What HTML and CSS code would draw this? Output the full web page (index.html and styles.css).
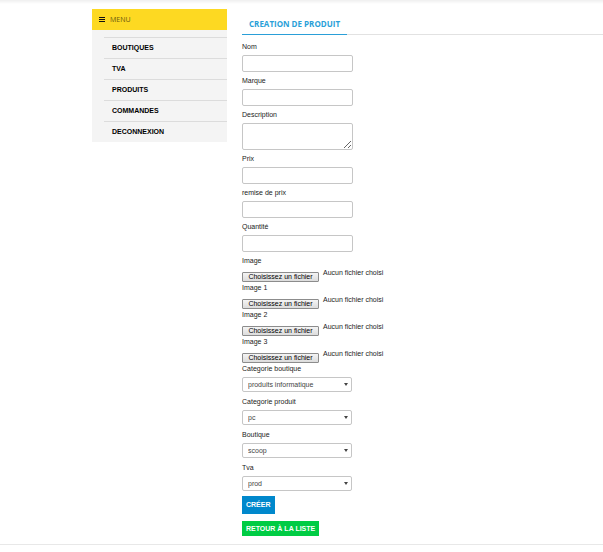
FILE: index.html
```html
<!DOCTYPE html>
<html lang="fr">
<head>
<meta charset="utf-8">
<meta name="viewport" content="width=device-width, initial-scale=1">
<title>Creation de produit</title>
<link rel="stylesheet" href="styles.css">
</head>
<body>
<div class="page">
  <aside class="sidebar">
    <div class="menu-title">
      <svg class="menu-icon" viewBox="0 0 6 6" aria-hidden="true"><path d="M0 0h6v1H0zM0 2h6v1H0zM0 4h6v1H0z"/></svg>
      <span>MENU</span>
    </div>
    <nav class="menu">
      <a href="#">BOUTIQUES</a>
      <a href="#">TVA</a>
      <a href="#">PRODUITS</a>
      <a href="#">COMMANDES</a>
      <a href="#">DECONNEXION</a>
    </nav>
  </aside>
  <main class="content">
    <div class="tabs"><h1 class="tab">CREATION DE PRODUIT</h1></div>
    <form class="form">
      <div class="field"><label for="nom">Nom</label><input class="control" id="nom" type="text"></div>
      <div class="field"><label for="marque">Marque</label><input class="control" id="marque" type="text"></div>
      <div class="field"><label for="description">Description</label><textarea class="control area" id="description"></textarea></div>
      <div class="field"><label for="prix">Prix</label><input class="control" id="prix" type="text"></div>
      <div class="field"><label for="remise">remise de prix</label><input class="control" id="remise" type="text"></div>
      <div class="field"><label for="quantite">Quantité</label><input class="control" id="quantite" type="text"></div>
      <div class="files">
        <div class="file"><label for="image">Image</label><div class="picker"><button class="choose" id="image" type="button">Choisissez un fichier</button><span>Aucun fichier choisi</span></div></div>
        <div class="file"><label for="image1">Image 1</label><div class="picker"><button class="choose" id="image1" type="button">Choisissez un fichier</button><span>Aucun fichier choisi</span></div></div>
        <div class="file"><label for="image2">Image 2</label><div class="picker"><button class="choose" id="image2" type="button">Choisissez un fichier</button><span>Aucun fichier choisi</span></div></div>
        <div class="file"><label for="image3">Image 3</label><div class="picker"><button class="choose" id="image3" type="button">Choisissez un fichier</button><span>Aucun fichier choisi</span></div></div>
      </div>
      <div class="choice"><label for="cat-boutique">Categorie boutique</label><div class="select"><select id="cat-boutique"><option>produits informatique</option></select></div></div>
      <div class="choice"><label for="cat-produit">Categorie produit</label><div class="select"><select id="cat-produit"><option>pc</option></select></div></div>
      <div class="choice"><label for="boutique">Boutique</label><div class="select"><select id="boutique"><option>scoop</option></select></div></div>
      <div class="choice"><label for="tva">Tva</label><div class="select"><select id="tva"><option>prod</option></select></div></div>
      <div class="actions">
        <button class="create" type="submit">CRÉER</button>
        <a class="back" href="#">RETOUR À LA LISTE</a>
      </div>
    </form>
  </main>
</div>
</body>
</html>
```
FILE: styles.css
```css
* { box-sizing: border-box; }

body {
  margin: 0;
  background: #fff;
  color: #222;
  font: 7px/10px "Liberation Sans", Arial, sans-serif;
}

.page {
  display: flex;
  align-items: flex-start;
  gap: 15px;
  padding: 9px 0 8px 92px;
  border-bottom: 1px solid #e8e8e8;
  background: linear-gradient(#efefef, #fff 4px);
}

.sidebar {
  flex: 0 0 135px;
  background: #f4f4f4;
}

.menu-title {
  display: flex;
  align-items: center;
  gap: 5px;
  height: 21px;
  padding-left: 7px;
  background: #fdd922;
  color: #6b5a10;
  font-family: "Open Sans", sans-serif;
}

.menu-icon {
  width: 6px;
  height: 6px;
  fill: #111;
}

.menu {
  display: flex;
  flex-direction: column;
  padding: 7px 0 0 12px;
}

.menu a {
  padding-left: 8px;
  border-top: 1px solid #dcdcdc;
  color: #000;
  font-weight: bold;
  line-height: 20px;
  text-decoration: none;
}

.content {
  flex: 1;
  min-width: 0;
}

.tabs {
  display: flex;
  height: 26px;
  border-bottom: 1px solid #e2e2e2;
}

.tab {
  height: 26px;
  margin: 0;
  padding: 0 7px;
  border-bottom: 1px solid #2a9fd8;
  color: #2a9fd8;
  font: 700 8px/30px "Open Sans", sans-serif;
}

.form { padding-top: 7px; }

.field { padding-bottom: 4px; }

label { display: block; }

.field label { padding-bottom: 3px; }

.control {
  display: block;
  width: 111px;
  height: 17px;
  margin: 0;
  padding: 2px 4px;
  border: 1px solid #c6c6c6;
  border-radius: 2px;
  background: #fff;
  font: inherit;
}

.area { height: 27px; }

.file { height: 27px; }

.picker {
  display: flex;
  align-items: flex-end;
  gap: 4px;
}

.picker span { padding-bottom: 4px; }

.choose {
  width: 77px;
  height: 10px;
  margin-top: 6px;
  padding: 0;
  border: 1px solid #8c8c8c;
  border-radius: 1px;
  background: linear-gradient(#f4f4f4, #dcdcdc);
  color: #000;
  font: inherit;
  line-height: 8px;
  white-space: nowrap;
}

.choice { padding-bottom: 5px; }

.choice label { padding-bottom: 3px; }

.select {
  position: relative;
  width: 110px;
}

.select::after {
  content: "";
  position: absolute;
  top: 6px;
  right: 4px;
  border: 2px solid transparent;
  border-top: 3px solid #444;
  border-bottom: 0;
  pointer-events: none;
}

select {
  display: block;
  width: 100%;
  height: 15px;
  padding: 0 5px;
  border: 1px solid #c6c6c6;
  border-radius: 2px;
  appearance: none;
  background: #fff;
  color: #444;
  font: inherit;
}

.actions {
  display: flex;
  flex-direction: column;
  align-items: flex-start;
  gap: 7px;
}

.create,
.back {
  padding: 0 4px;
  border: 0;
  color: #fff;
  font: bold 7px/15px "Liberation Sans", Arial, sans-serif;
  text-decoration: none;
}

.create {
  background: #0088cc;
  line-height: 18px;
}

.back { background: #00cc44; }
```
